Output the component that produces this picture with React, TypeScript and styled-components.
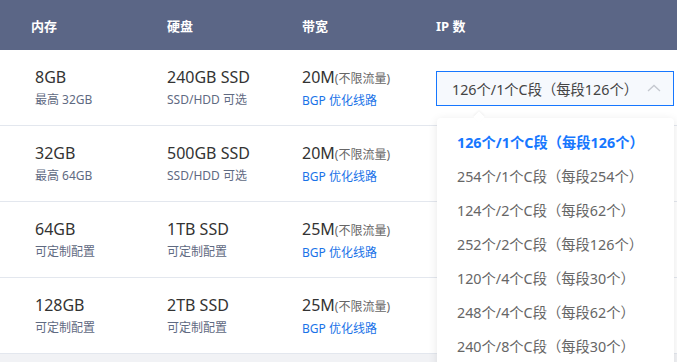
import React from "react";
import styled, { createGlobalStyle } from "styled-components";

const GlobalStyle = createGlobalStyle`
  html, body {
    margin: 0;
    padding: 0;
    background: #f1f2f5;
  }
  body {
    font-family: "Noto Sans", "Noto Sans CJK SC", sans-serif;
    width: 677px;
    height: 362px;
    overflow: hidden;
  }
`;

type Plan = {
  mem: string;
  memNote: string;
  disk: string;
  diskNote: string;
  bw: string;
};

const plans: Plan[] = [
  { mem: "8GB", memNote: "最高 32GB", disk: "240GB SSD", diskNote: "SSD/HDD 可选", bw: "20M" },
  { mem: "32GB", memNote: "最高 64GB", disk: "500GB SSD", diskNote: "SSD/HDD 可选", bw: "20M" },
  { mem: "64GB", memNote: "可定制配置", disk: "1TB SSD", diskNote: "可定制配置", bw: "25M" },
  { mem: "128GB", memNote: "可定制配置", disk: "2TB SSD", diskNote: "可定制配置", bw: "25M" },
];

const ipOptions = [
  "126个/1个C段（每段126个）",
  "254个/1个C段（每段254个）",
  "124个/2个C段（每段62个）",
  "252个/2个C段（每段126个）",
  "120个/4个C段（每段30个）",
  "248个/4个C段（每段62个）",
  "240个/8个C段（每段30个）",
];

const Table = styled.div`
  width: 677px;
  background: #fff;
`;

const HeadRow = styled.div`
  display: grid;
  grid-template-columns: 136px 135px 134px 238px;
  align-items: center;
  height: 50px;
  padding-left: 31px;
  background: #5b6686;
  color: #fff;
  font-size: 13px;
  font-weight: 700;
`;

const Row = styled.div`
  display: grid;
  grid-template-columns: 136px 135px 134px 238px;
  align-items: center;
  height: 75px;
  padding-left: 31px;
  border-bottom: 1px solid #e3e7ee;
`;

const Cell = styled.div<{ $indent?: boolean }>`
  display: flex;
  flex-direction: column;
  gap: 5px;
  padding-left: ${(p) => (p.$indent ? "4px" : "0")};
`;

const Main = styled.div`
  font-size: 16px;
  line-height: 19px;
  color: #333;
`;

const Small = styled.span`
  font-size: 12px;
  color: #666;
`;

const Note = styled.div<{ $blue?: boolean }>`
  font-size: 12px;
  line-height: 15px;
  color: ${(p) => (p.$blue ? "#1a73e8" : "#5f6a82")};
`;

const SelectWrap = styled.div`
  position: relative;
  margin-top: 1px;
`;

const SelectBox = styled.div`
  height: 35px;
  box-sizing: border-box;
  border: 1px solid #1677ff;
  background: #f6f9fd;
  display: flex;
  align-items: center;
  justify-content: space-between;
  padding: 0 12px 0 15px;
  font-size: 14.3px;
  color: #444;
`;

const Dropdown = styled.div`
  position: absolute;
  top: 47px;
  left: 1px;
  width: 237px;
  height: 260px;
  background: #fff;
  border-radius: 4px;
  box-shadow: 0 2px 10px rgba(0, 0, 0, 0.1);
  padding-top: 7px;
  box-sizing: border-box;
  z-index: 2;

  &::before {
    content: "";
    position: absolute;
    top: -5px;
    left: 38px;
    width: 8px;
    height: 8px;
    background: #fff;
    transform: rotate(45deg);
    box-shadow: -1px -1px 2px rgba(0, 0, 0, 0.05);
  }
`;

const Option = styled.div<{ $active?: boolean }>`
  height: 34px;
  display: flex;
  align-items: center;
  padding-left: 20px;
  font-size: 14.3px;
  color: ${(p) => (p.$active ? "#1677ff" : "#666")};
  font-weight: ${(p) => (p.$active ? 700 : 400)};
`;

const Chevron = () => (
  <svg width="14" height="8" viewBox="0 0 14 8" fill="none">
    <path d="M1 7L7 1.5L13 7" stroke="#c4c8cf" strokeWidth="1.3" />
  </svg>
);

export default function App() {
  return (
    <>
      <GlobalStyle />
      <Table>
        <HeadRow>
          <div>内存</div>
          <div>硬盘</div>
          <div>带宽</div>
          <div>IP 数</div>
        </HeadRow>
        {plans.map((p, i) => (
          <Row key={p.mem}>
            <Cell $indent>
              <Main>{p.mem}</Main>
              <Note>{p.memNote}</Note>
            </Cell>
            <Cell>
              <Main>{p.disk}</Main>
              <Note>{p.diskNote}</Note>
            </Cell>
            <Cell>
              <Main>
                {p.bw}
                <Small>(不限流量)</Small>
              </Main>
              <Note $blue>BGP 优化线路</Note>
            </Cell>
            <div>
              {i === 0 && (
                <SelectWrap>
                  <SelectBox>
                    <span>{ipOptions[0]}</span>
                    <Chevron />
                  </SelectBox>
                  <Dropdown>
                    {ipOptions.map((o, j) => (
                      <Option key={o} $active={j === 0}>
                        {o}
                      </Option>
                    ))}
                  </Dropdown>
                </SelectWrap>
              )}
            </div>
          </Row>
        ))}
      </Table>
    </>
  );
}
